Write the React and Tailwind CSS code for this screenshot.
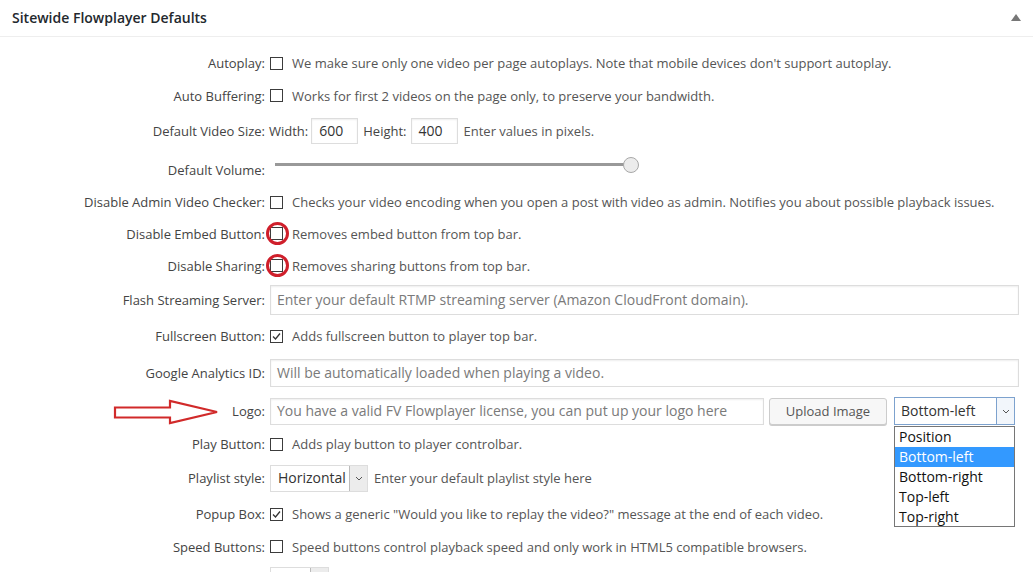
import React from "react";

function Box({ checked = false }) {
  return (
    <span className="relative inline-flex w-[13px] h-[13px] shrink-0 border border-[#3c3c3c] bg-white items-center justify-center">
      {checked && (
        <svg width="11" height="11" viewBox="0 0 11 11" className="block">
          <polyline points="2,5.5 4.5,8 9,2.5" fill="none" stroke="#333" strokeWidth="1.3" />
        </svg>
      )}
    </span>
  );
}

function Circle() {
  return (
    <span className="absolute left-[-4px] top-[-5px] w-[23px] h-[23px] rounded-full border-[3px] border-[#cf1f2b] pointer-events-none" />
  );
}

function Label({ children }) {
  return <div className="w-[266px] shrink-0 text-right text-[#444] pr-[1px]">{children}</div>;
}

function CheckRow({ h, label, text, checked, circle }) {
  return (
    <div className={`flex items-center ${h}`}>
      <Label>{label}</Label>
      <div className="ml-[4px] flex items-center">
        <span className="relative inline-flex">
          <Box checked={checked} />
          {circle && <Circle />}
        </span>
        <span className="ml-[9px] text-[#555]">{text}</span>
      </div>
    </div>
  );
}

function Chevron({ className = "" }) {
  return (
    <svg width="8" height="5" viewBox="0 0 8 5" className={className}>
      <polyline points="1,1 4,4 7,1" fill="none" stroke="#555" strokeWidth="1" />
    </svg>
  );
}

export default function App() {
  return (
    <div className="relative w-[1033px] h-[572px] overflow-hidden bg-white font-['Open_Sans',sans-serif] text-[13px] leading-[18px] text-[#444]">
      <div className="h-[37px] border-b border-[#eee] flex items-center justify-between pl-[12px] pr-[12px]">
        <h2 className="text-[14px] font-semibold text-[#23282d] -mt-[1px]">Sitewide Flowplayer Defaults</h2>
        <svg width="10" height="7" viewBox="0 0 10 7" className="-mt-[1px] mr-[0px]">
          <polygon points="5,0 10,7 0,7" fill="#777" />
        </svg>
      </div>

      <div className="pt-[10px]">
        <CheckRow
          h="h-[32px]"
          label="Autoplay:"
          text="We make sure only one video per page autoplays. Note that mobile devices don't support autoplay."
        />
        <CheckRow
          h="h-[33px]"
          label="Auto Buffering:"
          text="Works for first 2 videos on the page only, to preserve your bandwidth."
        />

        <div className="flex items-center h-[38px]">
          <Label>Default Video Size:</Label>
          <div className="ml-[3px] flex items-center text-[#444]">
            <span>Width:</span>
            <div className="ml-[3px] w-[47px] h-[26px] border border-[#ddd] shadow-[inset_0_1px_2px_rgba(0,0,0,0.07)] flex items-center pl-[7px] text-[14px] text-[#333]">
              600
            </div>
            <span className="ml-[5px]">Height:</span>
            <div className="ml-[4px] w-[47px] h-[26px] border border-[#ddd] shadow-[inset_0_1px_2px_rgba(0,0,0,0.07)] flex items-center pl-[7px] text-[14px] text-[#333]">
              400
            </div>
            <span className="ml-[6px] text-[#555]">Enter values in pixels.</span>
          </div>
        </div>

        <div className="flex items-center h-[36px] pt-[4px]">
          <Label>Default Volume:</Label>
          <div className="ml-[9px] relative w-[366px] h-[20px] -mt-[10px]">
            <div className="absolute left-0 top-[8px] w-[352px] h-[3px] bg-[#999]" />
            <div className="absolute left-[348px] top-[2px] w-[16px] h-[16px] rounded-full bg-[#ececec] border border-[#a8a8a8]" />
          </div>
        </div>

        <CheckRow
          h="h-[32px]"
          label="Disable Admin Video Checker:"
          text="Checks your video encoding when you open a post with video as admin. Notifies you about possible playback issues."
        />
        <CheckRow h="h-[31px]" label="Disable Embed Button:" text="Removes embed button from top bar." circle />
        <CheckRow h="h-[33px]" label="Disable Sharing:" text="Removes sharing buttons from top bar." circle />

        <div className="flex items-center h-[36px]">
          <Label>Flash Streaming Server:</Label>
          <div className="ml-[4px] w-[749px] h-[30px] border border-[#ddd] shadow-[inset_0_1px_2px_rgba(0,0,0,0.07)] flex items-center pl-[6px] text-[14px] text-[#7a7a7a]">
            Enter your default RTMP streaming server (Amazon CloudFront domain).
          </div>
        </div>

        <CheckRow h="h-[36px]" label="Fullscreen Button:" text="Adds fullscreen button to player top bar." checked />

        <div className="flex items-center h-[37px]">
          <Label>Google Analytics ID:</Label>
          <div className="ml-[4px] w-[749px] h-[28px] border border-[#ddd] shadow-[inset_0_1px_2px_rgba(0,0,0,0.07)] flex items-center pl-[6px] text-[14px] text-[#7a7a7a]">
            Will be automatically loaded when playing a video.
          </div>
        </div>

        <div className="relative flex items-center h-[36px] mt-[2px]">
          <svg width="108" height="26" viewBox="0 0 108 26" className="absolute left-[113px] top-[6px]">
            <polygon
              points="2,8.5 57,8.5 57,2 104,13 57,24 57,18.5 2,18.5"
              fill="none"
              stroke="#d12a2a"
              strokeWidth="2.2"
              strokeLinejoin="miter"
            />
          </svg>
          <Label>Logo:</Label>
          <div className="ml-[4px] flex items-center">
            <div className="w-[494px] h-[27px] border border-[#ddd] shadow-[inset_0_1px_2px_rgba(0,0,0,0.07)] flex items-center pl-[6px] text-[14px] text-[#7a7a7a]">
              You have a valid FV Flowplayer license, you can put up your logo here
            </div>
            <div className="ml-[5px] w-[118px] h-[27px] rounded-[3px] border border-[#ccc] bg-[#f7f7f7] shadow-[0_1px_0_#ccc] flex items-center justify-center text-[#555]">
              Upload Image
            </div>
            <div className="relative ml-[7px] w-[121px] h-[28px] border border-[#7da2ce] bg-white flex items-center">
              <span className="pl-[6px] text-[14px] text-[#333] flex-1">Bottom-left</span>
              <span className="w-[18px] h-full border-l border-[#7da2ce] bg-[#f2f6fb] flex items-center justify-center">
                <Chevron />
              </span>
              <div className="absolute left-[-1px] top-[28px] w-[121px] border border-[#767676] bg-white text-[14px] leading-[20px] text-[#111] z-10">
                <div className="pl-[4px] h-[20px]">Position</div>
                <div className="pl-[4px] h-[20px] bg-[#3399ff] text-white">Bottom-left</div>
                <div className="pl-[4px] h-[20px]">Bottom-right</div>
                <div className="pl-[4px] h-[20px]">Top-left</div>
                <div className="pl-[4px] h-[19px]">Top-right</div>
              </div>
            </div>
          </div>
        </div>

        <CheckRow h="h-[30px]" label="Play Button:" text="Adds play button to player controlbar." />

        <div className="flex items-center h-[38px]">
          <Label>Playlist style:</Label>
          <div className="ml-[4px] flex items-center">
            <div className="w-[98px] h-[27px] border border-[#ddd] flex items-center">
              <span className="pl-[7px] text-[14px] text-[#333] flex-1">Horizontal</span>
              <span className="w-[18px] h-full border-l border-[#bbb] bg-[#ececec] flex items-center justify-center">
                <Chevron />
              </span>
            </div>
            <span className="ml-[6px] text-[#555]">Enter your default playlist style here</span>
          </div>
        </div>

        <CheckRow
          h="h-[34px]"
          label="Popup Box:"
          text={'Shows a generic "Would you like to replay the video?" message at the end of each video.'}
          checked
        />
        <CheckRow
          h="h-[31px]"
          label="Speed Buttons:"
          text="Speed buttons control playback speed and only work in HTML5 compatible browsers."
        />

        <div className="flex items-start h-[40px] pt-[5px]">
          <Label>&nbsp;</Label>
          <div className="ml-[4px] w-[59px] h-[27px] border border-[#ddd] flex items-center justify-end">
            <span className="w-[18px] h-full border-l border-[#bbb] bg-[#ececec]" />
          </div>
        </div>
      </div>
    </div>
  );
}
